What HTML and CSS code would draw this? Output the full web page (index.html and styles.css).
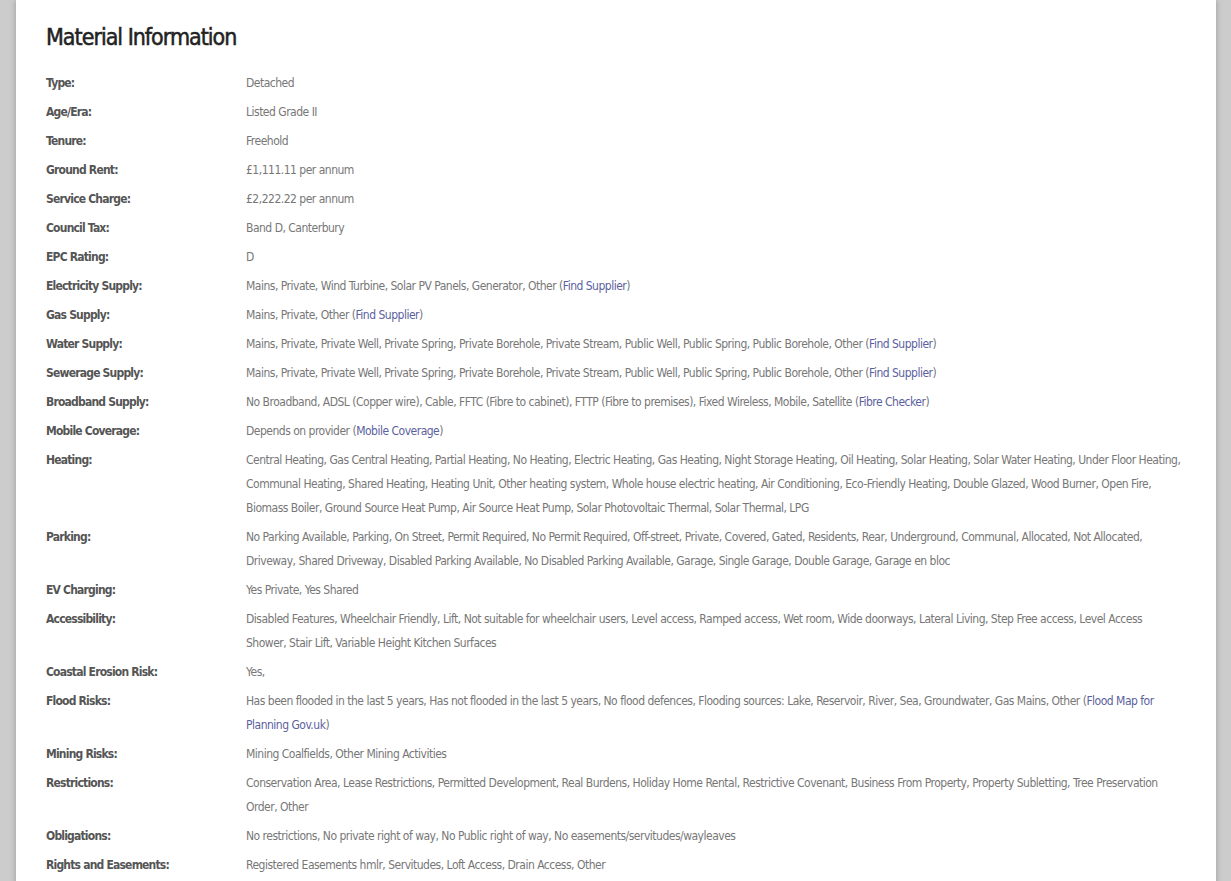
FILE: index.html
```html
<!DOCTYPE html>
<html lang="en">
<head>
<meta charset="utf-8">
<title>Material Information</title>
<link rel="stylesheet" href="styles.css">
</head>
<body>
<main class="panel">
  <h2 class="title">Material Information</h2>
  <dl class="info">
    <dt>Type:</dt><dd>Detached</dd>
    <dt>Age/Era:</dt><dd>Listed Grade II</dd>
    <dt>Tenure:</dt><dd>Freehold</dd>
    <dt>Ground Rent:</dt><dd>£1,111.11 per annum</dd>
    <dt>Service Charge:</dt><dd>£2,222.22 per annum</dd>
    <dt>Council Tax:</dt><dd>Band D, Canterbury</dd>
    <dt>EPC Rating:</dt><dd>D</dd>
    <dt>Electricity Supply:</dt><dd>Mains, Private, Wind Turbine, Solar PV Panels, Generator, Other (<a href="#">Find Supplier</a>)</dd>
    <dt>Gas Supply:</dt><dd>Mains, Private, Other (<a href="#">Find Supplier</a>)</dd>
    <dt>Water Supply:</dt><dd>Mains, Private, Private Well, Private Spring, Private Borehole, Private Stream, Public Well, Public Spring, Public Borehole, Other (<a href="#">Find Supplier</a>)</dd>
    <dt>Sewerage Supply:</dt><dd>Mains, Private, Private Well, Private Spring, Private Borehole, Private Stream, Public Well, Public Spring, Public Borehole, Other (<a href="#">Find Supplier</a>)</dd>
    <dt>Broadband Supply:</dt><dd>No Broadband, ADSL (Copper wire), Cable, FFTC (Fibre to cabinet), FTTP (Fibre to premises), Fixed Wireless, Mobile, Satellite (<a href="#">Fibre Checker</a>)</dd>
    <dt>Mobile Coverage:</dt><dd>Depends on provider (<a href="#">Mobile Coverage</a>)</dd>
    <dt>Heating:</dt><dd>Central Heating, Gas Central Heating, Partial Heating, No Heating, Electric Heating, Gas Heating, Night Storage Heating, Oil Heating, Solar Heating, Solar Water Heating, Under Floor Heating,<br>Communal Heating, Shared Heating, Heating Unit, Other heating system, Whole house electric heating, Air Conditioning, Eco-Friendly Heating, Double Glazed, Wood Burner, Open Fire,<br>Biomass Boiler, Ground Source Heat Pump, Air Source Heat Pump, Solar Photovoltaic Thermal, Solar Thermal, LPG</dd>
    <dt>Parking:</dt><dd>No Parking Available, Parking, On Street, Permit Required, No Permit Required, Off-street, Private, Covered, Gated, Residents, Rear, Underground, Communal, Allocated, Not Allocated,<br>Driveway, Shared Driveway, Disabled Parking Available, No Disabled Parking Available, Garage, Single Garage, Double Garage, Garage en bloc</dd>
    <dt>EV Charging:</dt><dd>Yes Private, Yes Shared</dd>
    <dt>Accessibility:</dt><dd>Disabled Features, Wheelchair Friendly, Lift, Not suitable for wheelchair users, Level access, Ramped access, Wet room, Wide doorways, Lateral Living, Step Free access, Level Access<br>Shower, Stair Lift, Variable Height Kitchen Surfaces</dd>
    <dt>Coastal Erosion Risk:</dt><dd>Yes,</dd>
    <dt>Flood Risks:</dt><dd>Has been flooded in the last 5 years, Has not flooded in the last 5 years, No flood defences, Flooding sources: Lake, Reservoir, River, Sea, Groundwater, Gas Mains, Other (<a href="#">Flood Map for<br>Planning Gov.uk</a>)</dd>
    <dt>Mining Risks:</dt><dd>Mining Coalfields, Other Mining Activities</dd>
    <dt>Restrictions:</dt><dd>Conservation Area, Lease Restrictions, Permitted Development, Real Burdens, Holiday Home Rental, Restrictive Covenant, Business From Property, Property Subletting, Tree Preservation<br>Order, Other</dd>
    <dt>Obligations:</dt><dd>No restrictions, No private right of way, No Public right of way, No easements/servitudes/wayleaves</dd>
    <dt>Rights and Easements:</dt><dd>Registered Easements hmlr, Servitudes, Loft Access, Drain Access, Other</dd>
  </dl>
</main>
</body>
</html>
```

FILE: styles.css
```css
html, body {
  margin: 0;
  padding: 0;
}
body {
  background: #cccccc;
  font-family: "DejaVu Sans Condensed", "Liberation Sans", sans-serif;
}
.panel {
  margin: 0 15px 0 16px;
  background: #ffffff;
  box-shadow: 0 0 6px rgba(0, 0, 0, 0.25);
  padding: 22px 15px 40px 30px;
}
.title {
  margin: 0 0 19px 0;
  font-size: 23px;
  line-height: 30px;
  font-weight: 400;
  letter-spacing: -1px;
  color: #222222;
  -webkit-text-stroke: 0.5px #222222;
}
.info {
  margin: 0;
  display: grid;
  grid-template-columns: 200px 1fr;
  row-gap: 5px;
  font-size: 12px;
  line-height: 24px;
}
.info dt {
  color: #555555;
  font-weight: 700;
  letter-spacing: -0.8px;
}
.info dd {
  margin: 0;
  color: #777777;
  letter-spacing: -0.5px;
}
.info a {
  color: #5b5f9e;
  text-decoration: none;
}
```
